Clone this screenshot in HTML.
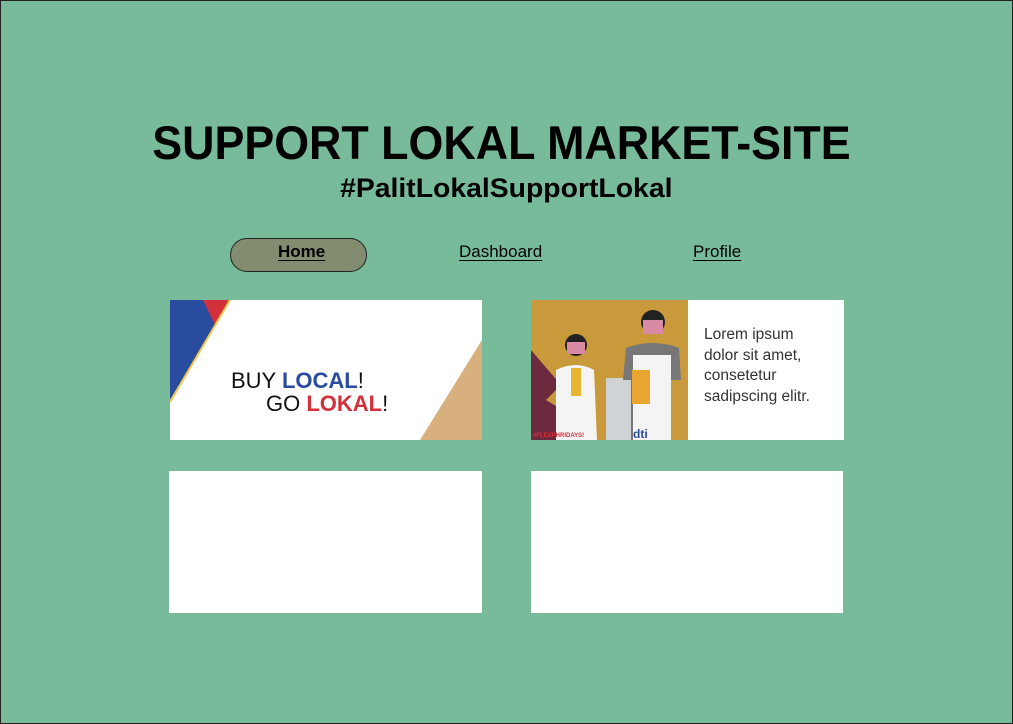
<!DOCTYPE html>
<html><head><meta charset="utf-8"><style>
html,body{margin:0;padding:0}
body{width:1013px;height:724px;overflow:hidden;position:relative;background:#77bb9b;font-family:"Liberation Sans",sans-serif;box-sizing:border-box;border:1px solid #222}
.t{position:absolute;left:-1px;width:1013px;text-align:center;color:#000;font-weight:bold;white-space:nowrap}
.t span{display:inline-block}
.nav{position:absolute;font-size:17px;color:#000;text-decoration:underline;text-underline-offset:3px}
.card{position:absolute;background:#fff}
</style></head><body>
<div class="t" style="top:116px;left:-6px;font-size:47px;line-height:52px"><span style="transform:scaleX(0.953)">SUPPORT LOKAL MARKET-SITE</span></div>
<div class="t" style="top:171px;font-size:27px;line-height:32px"><span style="transform:scaleX(1.05)">#PalitLokalSupportLokal</span></div>
<div style="position:absolute;left:229px;top:237px;width:135px;height:32px;border:1px solid #222;border-radius:17px;background:#828c6f"></div>
<div class="nav" style="left:277px;top:241px;font-weight:bold">Home</div>
<div class="nav" style="left:458px;top:241px">Dashboard</div>
<div class="nav" style="left:692px;top:241px">Profile</div>

<div class="card" style="left:169px;top:299px;width:312px;height:140px;overflow:hidden">
<svg width="312" height="140" viewBox="0 0 312 140">
<polygon points="0,0 60,0 0,100" fill="#2a4c9e"/>
<polygon points="33,0 60,0 45,25" fill="#d2303a"/>
<line x1="60" y1="0" x2="0" y2="102" stroke="#f2c94c" stroke-width="2"/>
<polygon points="312,40 312,140 250,140" fill="#d7b07d"/>
<text x="61" y="88" font-family="Liberation Sans" font-size="22" fill="#111">BUY <tspan font-weight="bold" fill="#2a4c9e">LOCAL</tspan>!</text>
<text x="96" y="111" font-family="Liberation Sans" font-size="22" fill="#111">GO <tspan font-weight="bold" fill="#d2303a">LOKAL</tspan>!</text>
</svg></div>

<div class="card" style="left:530px;top:299px;width:313px;height:140px;overflow:hidden">
<svg width="157" height="140" viewBox="0 0 157 140" style="position:absolute;left:0;top:0">
<rect width="157" height="140" fill="#c99a3c"/>
<rect x="75" y="78" width="25" height="62" fill="#cfd3d6"/>
<polygon points="0,50 30,85 15,100 40,115 40,140 0,140" fill="#6b2a3d"/>
<circle cx="45" cy="45" r="11" fill="#222"/>
<rect x="36" y="42" width="18" height="12" fill="#d98aa5"/>
<path d="M25,70 Q45,60 63,70 L66,140 L25,140 Z" fill="#f4f4f4"/>
<rect x="40" y="68" width="10" height="28" fill="#e8b530"/>
<circle cx="122" cy="22" r="12" fill="#222"/>
<rect x="112" y="20" width="20" height="14" fill="#d98aa5"/>
<path d="M95,48 Q122,38 148,48 L150,80 L140,80 L140,140 L100,140 L100,80 L92,80 Z" fill="#777"/>
<path d="M102,55 L140,55 L140,140 L102,140 Z" fill="#f4f4f4"/>
<rect x="101" y="70" width="18" height="34" fill="#e8a530"/>
<text x="2" y="137" font-family="Liberation Sans" font-size="6" font-weight="bold" fill="#d2303a">#FLEXPHRIDAYS!</text>
<text x="102" y="138" font-family="Liberation Sans" font-size="12" font-weight="bold" fill="#2a4c9e">dti</text>
</svg>
<div style="position:absolute;left:173px;top:25px;font-size:15.5px;line-height:20.5px;color:#333">Lorem ipsum<br>dolor sit amet,<br>consetetur<br>sadipscing elitr.</div>
</div>

<div class="card" style="left:168px;top:470px;width:313px;height:142px"></div>
<div class="card" style="left:530px;top:470px;width:312px;height:142px"></div>
</body></html>
